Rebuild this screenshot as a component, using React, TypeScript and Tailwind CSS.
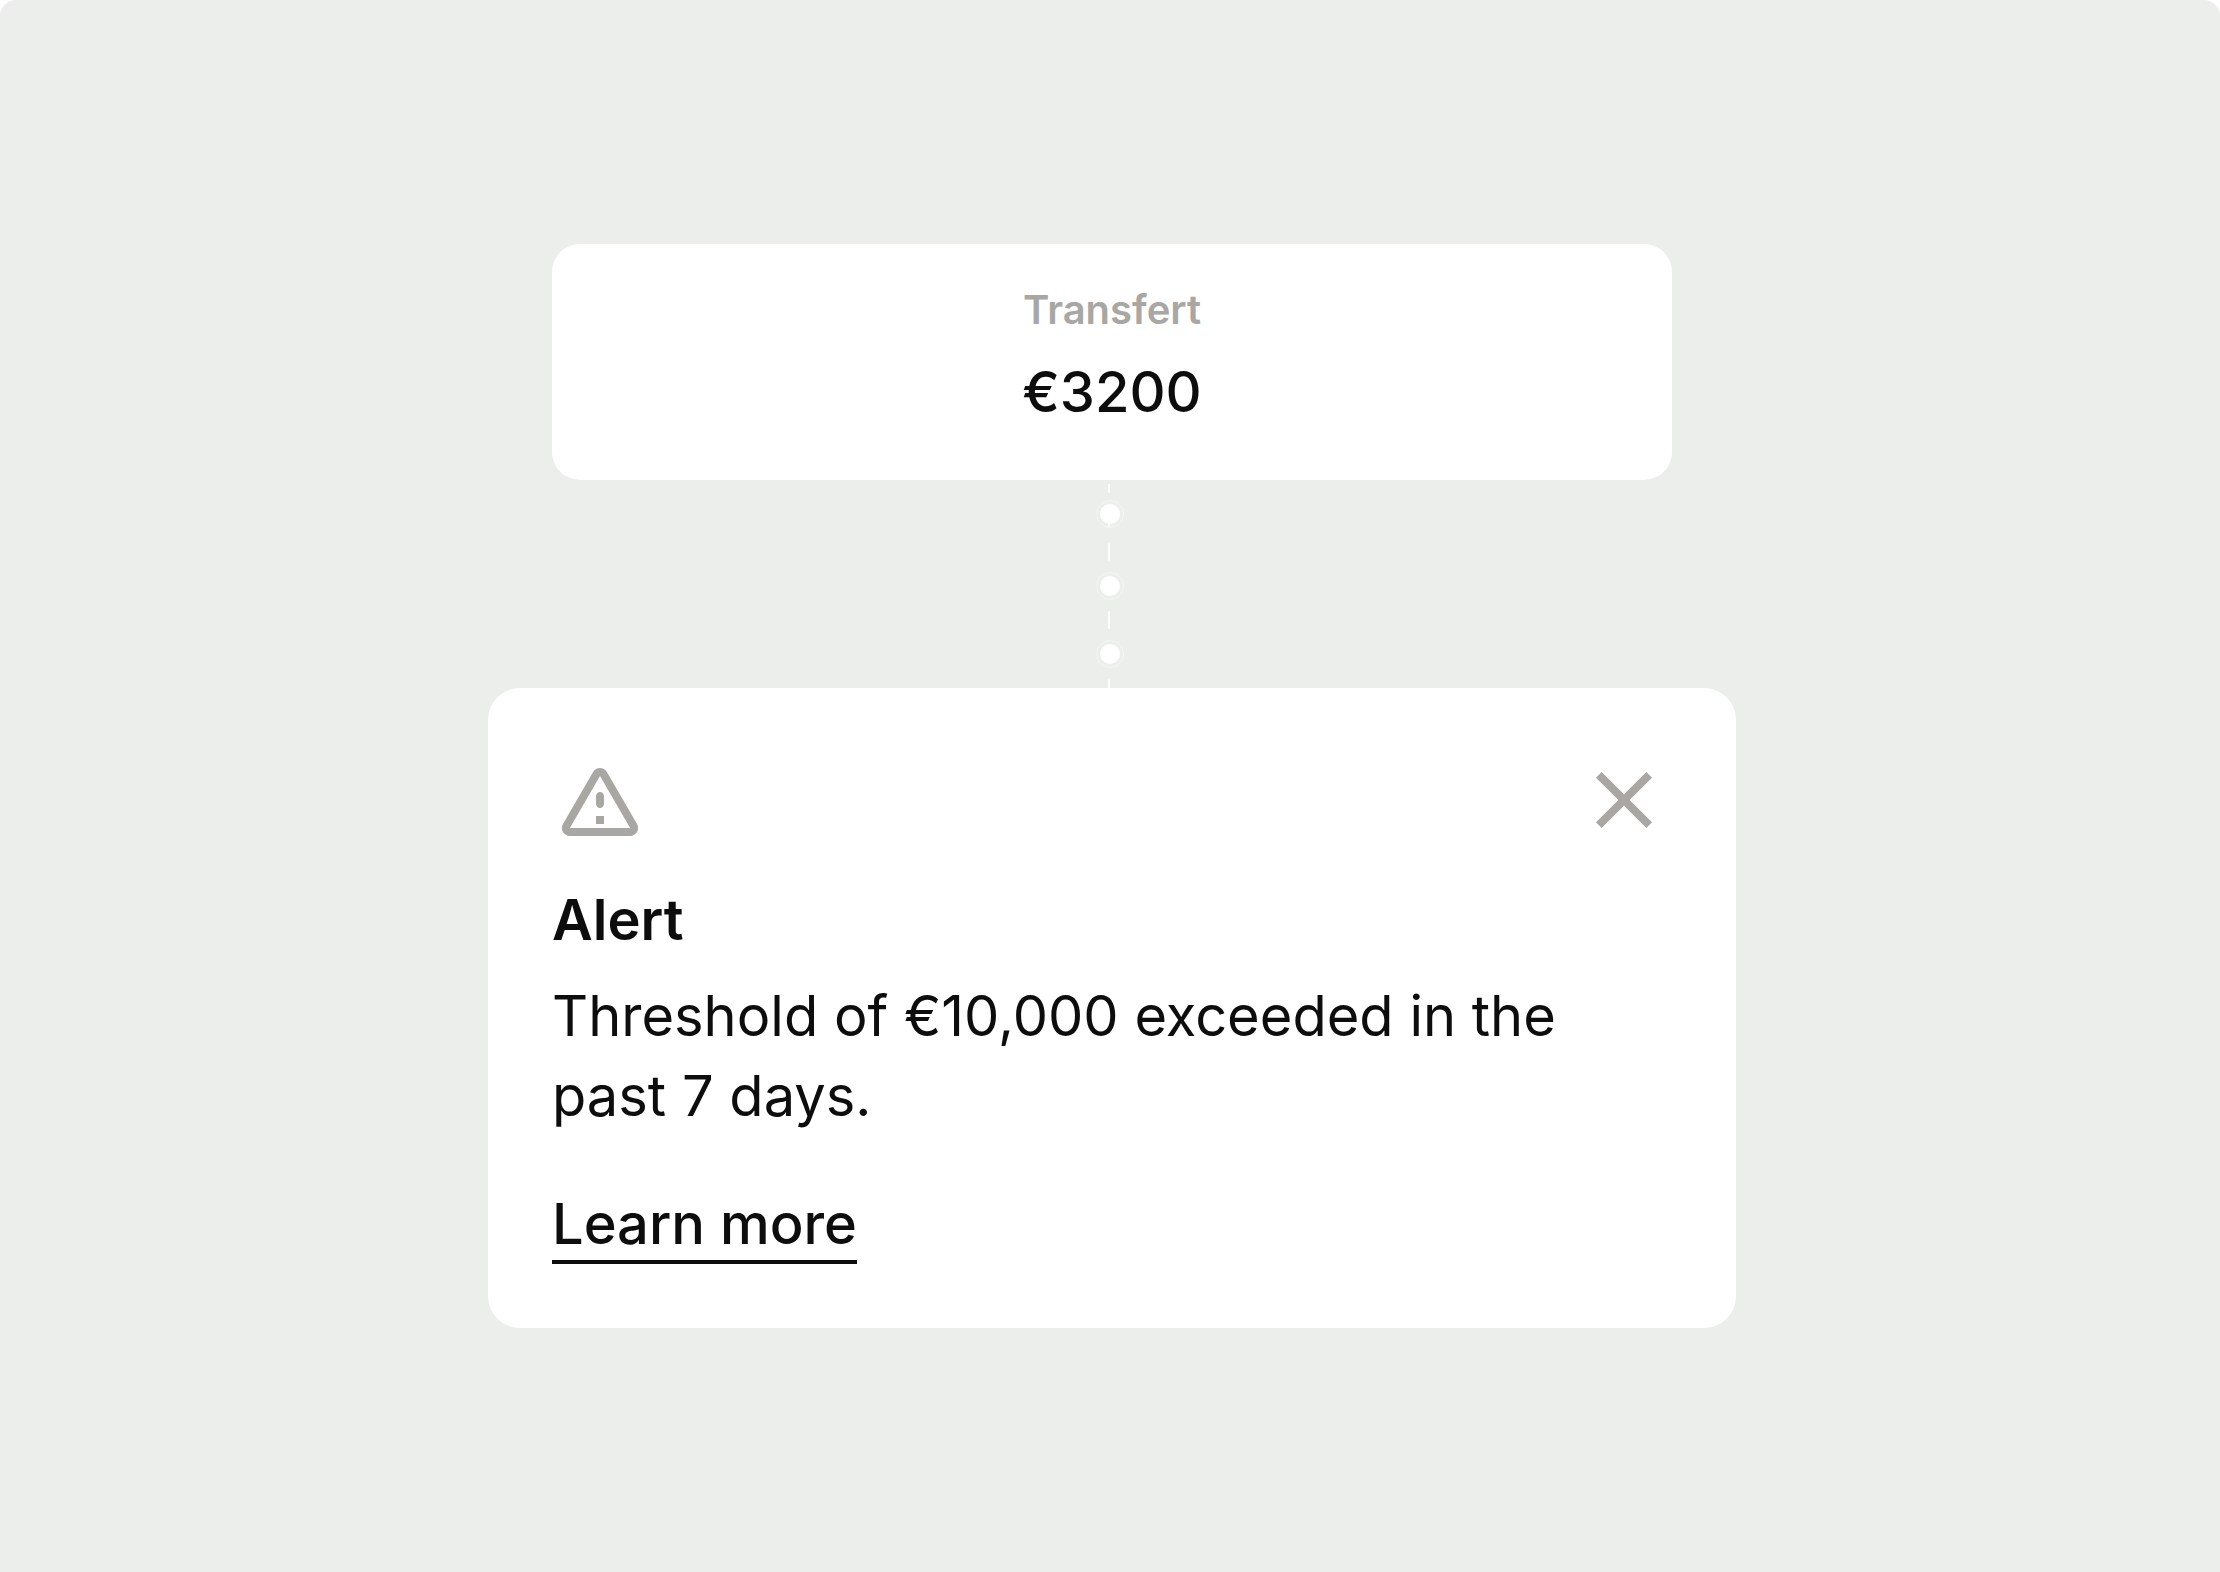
import { useState } from 'react';

interface TransferCardProps {
  label: string;
  amount: string;
}

interface AlertCardProps {
  title: string;
  message: string;
  onClose: () => void;
}

function WarningIcon() {
  return (
    <svg viewBox="0 0 24 24" className="size-24 fill-[#a8a7a3]" aria-hidden="true">
      <path d="M12 5.99 19.53 19H4.47L12 5.99M2.74 18c-.77 1.33.19 3 1.73 3h15.06c1.54 0 2.5-1.67 1.73-3L13.73 4.99c-.77-1.33-2.69-1.33-3.46 0L2.74 18zM11 11v2c0 .55.45 1 1 1s1-.45 1-1v-2c0-.55-.45-1-1-1s-1 .45-1 1zm0 5h2v2h-2z" />
    </svg>
  );
}

function CloseIcon() {
  return (
    <svg viewBox="0 0 24 24" className="size-24 fill-[#a8a7a3]" aria-hidden="true">
      <path d="M19 6.41 17.59 5 12 10.59 6.41 5 5 6.41 10.59 12 5 17.59 6.41 19 12 13.41 17.59 19 19 17.59 13.41 12z" />
    </svg>
  );
}

function TransferCard({ label, amount }: TransferCardProps) {
  return (
    <section className="flex w-full max-w-[1120px] flex-col items-center gap-3 rounded-[28px] bg-white px-16 pt-9 pb-12">
      <h2 className="text-[40px] leading-[60px] font-semibold text-[#a8a7a3]">{label}</h2>
      <p className="text-[56px] leading-[80px] font-medium">{amount}</p>
    </section>
  );
}

// Dashed line with three dots between the two cards
function Connector() {
  const dots = [34, 106, 174];

  return (
    <svg viewBox="0 0 32 208" className="h-52 w-8" fill="none" stroke="white" aria-hidden="true">
      <path d="M13 4v204" strokeWidth="2" strokeDasharray="17 17" strokeDashoffset="8.5" />
      {dots.map((y) => (
        <g key={y}>
          <circle cx="14" cy={y} r="10" fill="white" stroke="none" />
          <circle cx="14" cy={y} r="13.5" strokeOpacity="0.5" />
        </g>
      ))}
    </svg>
  );
}

function AlertCard({ title, message, onClose }: AlertCardProps) {
  return (
    <section role="alert" className="w-full max-w-[1248px] rounded-[32px] bg-white p-16 text-[56px] leading-[80px]">
      <div className="flex justify-between">
        <WarningIcon />
        <button type="button" aria-label="Close" onClick={onClose} className="cursor-pointer">
          <CloseIcon />
        </button>
      </div>
      <h2 className="mt-8 font-semibold">{title}</h2>
      <p className="mt-4">{message}</p>
      <div className="mt-12 flex">
        <a href="#" className="h-20 border-b-4 border-[#0d0d0d] font-medium">
          Learn more
        </a>
      </div>
    </section>
  );
}

export default function App() {
  const [isOpen, setIsOpen] = useState(true);

  return (
    <div className="bg-white">
      <main className="flex min-h-screen flex-col items-center justify-center rounded-t-2xl bg-[#ebeeeb] pl-1 font-['Inter',sans-serif] text-[#0d0d0d]">
        <TransferCard label="Transfert" amount="€3200" />
        <Connector />
        {isOpen && (
          <AlertCard
            title="Alert"
            message="Threshold of €10,000 exceeded in the past 7 days."
            onClose={() => setIsOpen(false)}
          />
        )}
      </main>
    </div>
  );
}
